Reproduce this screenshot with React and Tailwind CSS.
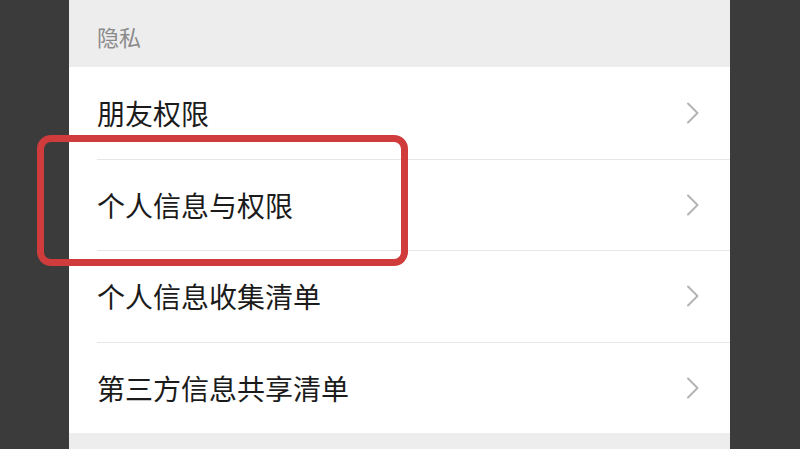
import React from 'react'

const rows = ['朋友权限', '个人信息与权限', '个人信息收集清单', '第三方信息共享清单']

const Chevron = () => (
  <svg width="14" height="22" viewBox="0 0 14 22" fill="none" className="shrink-0">
    <path d="M2 1.5 L11.5 11 L2 20.5" stroke="#b3b3b3" strokeWidth="2" strokeLinecap="round" strokeLinejoin="round" />
  </svg>
)

const App = () => {
  return (
    <div
      className="relative w-[800px] h-[449px] overflow-hidden bg-[#3b3b3b]"
      style={{ fontFamily: '"Noto Sans CJK SC", "Noto Sans", sans-serif' }}
    >
      <div className="ml-[69px] w-[661px] h-full bg-[#ededed]">
        <div className="h-[67px] pl-7 flex items-center">
          <span className="text-[22px] text-[#8a8a8a] leading-none pt-1">隐私</span>
        </div>
        <div className="bg-white">
          {rows.map((label, i) => (
            <div key={label} className="pl-7">
              <div
                className={`h-[91.5px] flex items-center justify-between pr-[30px] ${
                  i > 0 ? 'border-t border-[#e6e6e6]' : ''
                }`}
              >
                <span className="text-[28px] text-[#1b1b1b] leading-none">{label}</span>
                <Chevron />
              </div>
            </div>
          ))}
        </div>
      </div>

      {/* highlight box drawn over the list */}
      <div className="absolute left-[37px] top-[135px] w-[371px] h-[131px] border-[7px] border-[#d03c3c] rounded-[14px]" />
    </div>
  )
}

export default App
